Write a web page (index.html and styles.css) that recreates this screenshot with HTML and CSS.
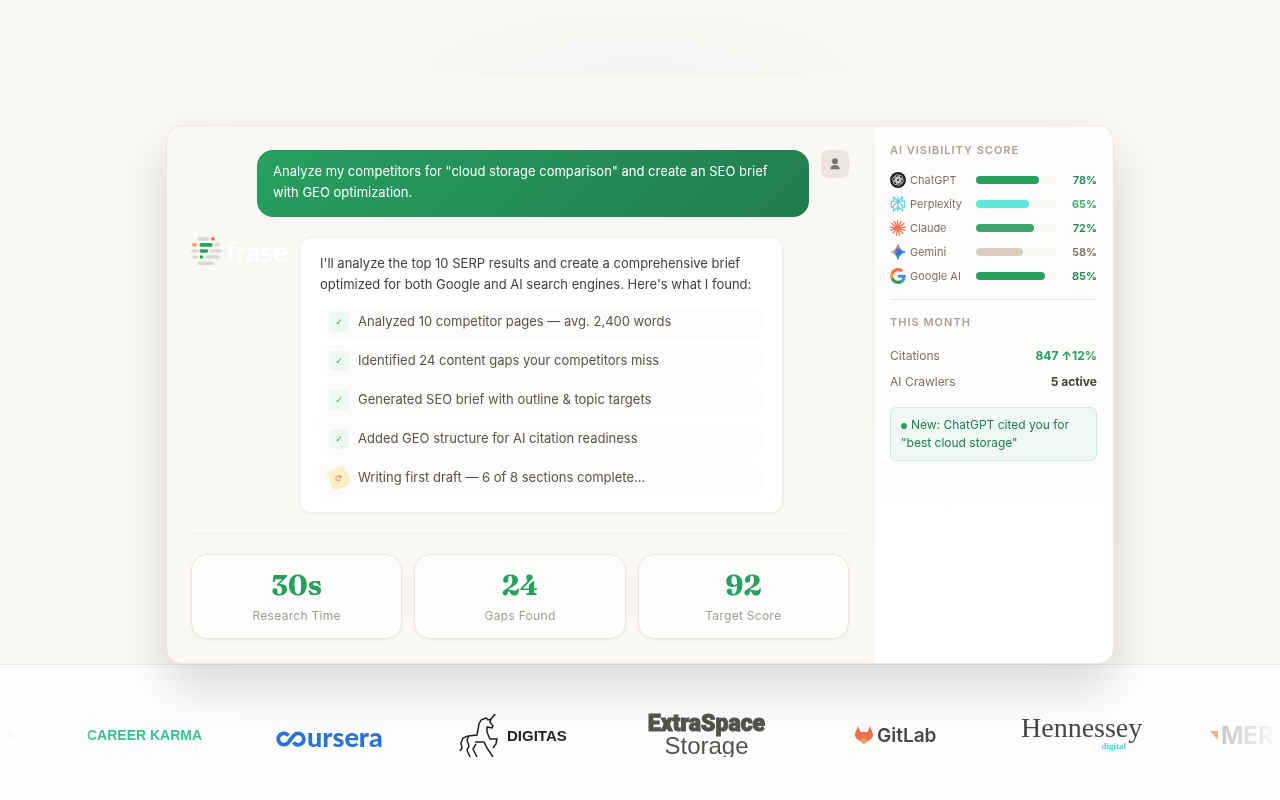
FILE: index.html
```html
<!DOCTYPE html>
<html lang="en">
<head>
    <meta charset="UTF-8">
    <meta name="viewport" content="width=device-width, initial-scale=1.0">
    <title>Frase - AI Visibility</title>
    <link rel="stylesheet" href="styles.css">
</head>
<body>

    <section class="hero">
        <div class="hero-top"></div>

        <div class="demo-card">
            <main class="chat">
                <div class="user-row">
                    <p class="user-bubble">Analyze my competitors for "cloud storage comparison" and create an SEO brief with GEO optimization.</p>
                    <div class="user-avatar">
                        <svg width="12" height="12" viewBox="0 0 12 12" fill="#78716c">
                            <circle cx="6" cy="3.2" r="2.9"/>
                            <path d="M1.5 11.2c0-3 1.7-4.2 4.5-4.2s4.5 1.2 4.5 4.2z"/>
                        </svg>
                    </div>
                </div>

                <div class="assistant-row">
                    <div class="frase-logo">
                        <svg width="32" height="30" viewBox="0 0 32 30" stroke-width="3.6" stroke-linecap="round" fill="none">
                            <path d="M8.5 1.9h7.500M25 7.900h2M1.800 14h3.700M20.800 14h8M3 20h2M16 20h11M8.300 26.200h13.200" stroke="#d9d9d8"/>
                            <path d="M21.800 1.900h.2" stroke="#f0714f"/>
                            <path d="M2.800 7.900h1.700" stroke="#eda765"/>
                            <path d="M10.300 7.900h9.600M10.300 14h5.200M10.400 20h.2" stroke="#26a05e"/>
                        </svg>
                        <span>frase</span>
                    </div>

                    <div class="answer">
                        <p>I'll analyze the top 10 SERP results and create a comprehensive brief optimized for both Google and AI search engines. Here's what I found:</p>
                        <ul class="steps">
                            <li><span class="step-icon">✓</span>Analyzed 10 competitor pages — avg. 2,400 words</li>
                            <li><span class="step-icon">✓</span>Identified 24 content gaps your competitors miss</li>
                            <li><span class="step-icon">✓</span>Generated SEO brief with outline &amp; topic targets</li>
                            <li><span class="step-icon">✓</span>Added GEO structure for AI citation readiness</li>
                            <li><span class="step-icon working">⟳</span>Writing first draft — 6 of 8 sections complete...</li>
                        </ul>
                    </div>
                </div>

                <div class="stats">
                    <div class="stat">
                        <div class="stat-value">30s</div>
                        <div class="stat-label">Research Time</div>
                    </div>
                    <div class="stat">
                        <div class="stat-value">24</div>
                        <div class="stat-label">Gaps Found</div>
                    </div>
                    <div class="stat">
                        <div class="stat-value">92</div>
                        <div class="stat-label">Target Score</div>
                    </div>
                </div>
            </main>

            <aside class="sidebar">
                <h2>AI Visibility Score</h2>
                <div class="scores">
                    <div class="score">
                        <svg width="16" height="16" viewBox="0 0 16 16" fill="none">
                            <circle cx="8" cy="8" r="8" fill="#242424"/>
                            <g stroke="#e5e5e5" stroke-width=".7">
                                <rect x="5" y="2.600" width="4.600" height="7.400" rx="2.300"/>
                                <rect x="5" y="2.600" width="4.600" height="7.400" rx="2.300" transform="rotate(60 8 8)"/>
                                <rect x="5" y="2.600" width="4.600" height="7.400" rx="2.300" transform="rotate(120 8 8)"/>
                                <rect x="5" y="2.600" width="4.600" height="7.400" rx="2.300" transform="rotate(180 8 8)"/>
                                <rect x="5" y="2.600" width="4.600" height="7.400" rx="2.300" transform="rotate(240 8 8)"/>
                                <rect x="5" y="2.600" width="4.600" height="7.400" rx="2.300" transform="rotate(300 8 8)"/>
                            </g>
                        </svg>
                        <span class="score-name">ChatGPT</span>
                        <div class="bar"><div class="fill green" style="width: 78%"></div></div>
                        <span class="score-value dark">78%</span>
                    </div>
                    <div class="score">
                        <svg width="16" height="16" viewBox="0 0 16 16" fill="none" stroke="#55d3dc" stroke-width="1.1">
                            <path d="M8 .5v15M3.500 .8v4.500h9V.8L8 5.300zM3.500 5.300H1.300v6h2.200M12.500 5.300h2.200v6h-2.200M8 5.300l-4.500 4.500v5.200L8 11M8 5.300l4.500 4.500v5.200L8 11"/>
                        </svg>
                        <span class="score-name">Perplexity</span>
                        <div class="bar"><div class="fill teal" style="width: 65%"></div></div>
                        <span class="score-value mid">65%</span>
                    </div>
                    <div class="score">
                        <svg width="16" height="16" viewBox="0 0 16 16" fill="none" stroke="#f0714f" stroke-width="1.3" stroke-linecap="round">
                            <path d="M8 8L7.500 .8M8 8l3-6.600M8 8l6-4.600M8 8l7.300-.8M8 8l7 2.300M8 8l5 5.500M8 8l1.600 7.200M8 8l-1.600 7.200M8 8l-5 5M8 8L.8 10M8 8L.7 7.200M8 8L1.800 3.500M8 8L4.300 1.600"/>
                        </svg>
                        <span class="score-name">Claude</span>
                        <div class="bar"><div class="fill soft" style="width: 72%"></div></div>
                        <span class="score-value dark">72%</span>
                    </div>
                    <div class="score">
                        <svg width="16" height="16" viewBox="0 0 16 16">
                            <defs>
                                <linearGradient id="gemini" x1="0" y1="0.4" x2="1" y2="0.6">
                                    <stop offset="0" stop-color="#eda25a"/>
                                    <stop offset=".2" stop-color="#d9a45c"/>
                                    <stop offset=".4" stop-color="#3f7fc0"/>
                                    <stop offset=".55" stop-color="#2f6fe0"/>
                                    <stop offset="1" stop-color="#3f86ee"/>
                                </linearGradient>
                            </defs>
                            <path d="M8 .5C8.800 4.200 11.300 7 15.500 8 11.300 9 8.800 11.800 8 15.500 7.200 11.800 4.700 9 .5 8 4.700 7 7.200 4.200 8 .5z" fill="url(#gemini)" stroke="url(#gemini)" stroke-width=".6"/>
                            <path d="M8 .3c.3 1.500.8 2.700 1.600 3.800L8 5.500 6.400 4.100C7.200 3 7.700 1.800 8 .3z" fill="#f0714f"/>
                            <path d="M8 15.700c-.3-1.500-.8-2.700-1.800-4L8 10.500l1.600 1.400c-.8 1.100-1.300 2.300-1.600 3.800z" fill="#2aa878"/>
                        </svg>
                        <span class="score-name">Gemini</span>
                        <div class="bar"><div class="fill sand" style="width: 58%"></div></div>
                        <span class="score-value gray">58%</span>
                    </div>
                    <div class="score">
                        <svg width="16" height="16" viewBox="0 0 48 48">
                            <path fill="#f0714f" d="M24 9.500c3.540 0 6.710 1.220 9.210 3.600l6.850-6.850C35.900 2.380 30.470 0 24 0 14.620 0 6.510 5.380 2.560 13.220l7.980 6.190C12.430 13.720 17.740 9.500 24 9.500z"/>
                            <path fill="#4a8af0" d="M46.980 24.550c0-1.570-.15-3.090-.38-4.550H24v9.020h12.940c-.58 2.960-2.260 5.480-4.780 7.180l7.730 6c4.510-4.180 7.090-10.360 7.090-17.650z"/>
                            <path fill="#eda25a" d="M10.530 28.590c-.48-1.450-.76-2.990-.76-4.590s.27-3.140.76-4.590l-7.980-6.190C.92 16.460 0 20.120 0 24c0 3.880.92 7.540 2.560 10.780l7.970-6.190z"/>
                            <path fill="#2aa05e" d="M24 48c6.480 0 11.930-2.130 15.890-5.810l-7.730-6c-2.150 1.450-4.920 2.300-8.160 2.300-6.260 0-11.570-4.220-13.470-9.910l-7.980 6.190C6.510 42.620 14.620 48 24 48z"/>
                        </svg>
                        <span class="score-name">Google AI</span>
                        <div class="bar"><div class="fill green" style="width: 85%"></div></div>
                        <span class="score-value dark">85%</span>
                    </div>
                </div>

                <h2>This Month</h2>
                <dl class="month">
                    <div><dt>Citations</dt><dd class="up">847 ↑12%</dd></div>
                    <div><dt>AI Crawlers</dt><dd>5 active</dd></div>
                </dl>
                <p class="notice"><span class="dot"></span>New: ChatGPT cited you for "best cloud storage"</p>
            </aside>
        </div>
    </section>

    <section class="customers">
        <svg class="peaks" width="220" height="60" viewBox="0 0 220 60" fill="#fdfcfa">
            <path d="M52 8L90 60H14zM188 0l52 60H146z"/>
        </svg>
        <div class="logos">
            <svg class="arrow" width="9" height="14" viewBox="0 0 9 14" fill="none" stroke="#888">
                <path d="M1 2l7 5-7 5M1 5l3 2-3 2"/>
            </svg>
            <span class="karma">CAREER KARMA</span>
            <span class="coursera">
                <svg width="31" height="16" viewBox="0 0 31 16" fill="none" stroke="#2a73d9" stroke-width="3.8">
                    <path d="M12.500 4.600A5.700 5.700 0 1 0 12.500 11.400C14.500 9 16 6.500 18 4.200A5.700 5.700 0 1 1 17.500 11.400"/>
                </svg>
                <span>ursera</span>
            </span>
            <span class="digitas">
                <svg width="39" height="43" viewBox="0 0 39 43" fill="none" stroke="#222" stroke-width="1.5">
                    <path d="M1 37l2-3-1-5 2-5 5-2 9-1 2-11 2-4 5-2 2 2 3-1 5-6M32 5l-1 3 3 4-1 2-5-1 0 5 3 7 7 0-1 5-3 4M10 22l-2 4 2 6-2 4 3 7M17 30l-3 5 4 8M16 28l9 0 3 6 6 9"/>
                </svg>
                <span>DIGITAS</span>
            </span>
            <span class="extraspace"><b>ExtraSpace</b><span>Storage</span></span>
            <span class="gitlab">
                <svg width="18" height="18" viewBox="0 0 18 18">
                    <path d="M3 0L.3 7c-.8 2.500 0 4.500 1.800 6L9 18l6.900-5c1.800-1.500 2.600-3.500 1.800-6L15 0l-2.500 6h-7z" fill="#f0714f"/>
                    <path d="M9 18l-4-3.200L9 12l4 2.800z" fill="#eda85a"/>
                </svg>
                <span>GitLab</span>
            </span>
            <span class="hennessey"><span>Hennessey</span><small>digital</small></span>
            <span class="mer">
                <svg width="8" height="9" viewBox="0 0 8 9"><path d="M0 0h8v9z" fill="#f08048"/></svg>
                <span>MER</span>
            </span>
        </div>
    </section>

</body>
</html>
```
FILE: styles.css
```css
* {
    box-sizing: border-box;
}

body {
    margin: 0;
    font-family: Inter, sans-serif;
    font-size: 13px;
    line-height: 21px;
    color: #44403c;
    background: #fefefe;
    overflow-x: hidden;
}

p, h2, ul, dl, dd {
    margin: 0;
    padding: 0;
}

.hero {
    background: #f9f8f4;
    border-bottom: 1px solid #f0e8e2;
}

.hero-top {
    height: 77px;
    margin-bottom: 48px;
    background: radial-gradient(ellipse 290px 90px at 50% 100%, #f4f3f2, #f9f8f4);
}

.demo-card {
    position: relative;
    z-index: 1;
    display: flex;
    max-width: 948px;
    margin: 0 auto;
    border: 1px solid #ede5de;
    border-radius: 16px;
    background: #f9f8f4;
    box-shadow: 0 25px 50px rgba(0, 0, 0, 0.15);
    will-change: transform;
}

.chat {
    flex: 1;
    padding: 24px;
}

.user-row {
    display: flex;
    justify-content: flex-end;
    gap: 12px;
    margin-bottom: 20px;
}

.user-bubble {
    max-width: 552px;
    padding: 11px 16px 14px;
    border-radius: 16px;
    background: linear-gradient(135deg, #27a05f, #217c4f);
    color: #fff;
}

.user-avatar {
    display: flex;
    align-items: center;
    justify-content: center;
    width: 28px;
    height: 28px;
    border-radius: 8px;
    background: #ede4de;
}

.assistant-row {
    display: flex;
    gap: 11px;
}

.frase-logo {
    display: flex;
    width: 97px;
    height: 30px;
    gap: 3px;
    font-family: Lato, sans-serif;
    font-size: 28px;
    font-weight: 700;
    line-height: 28px;
    color: #fff;
}

.answer {
    width: 484px;
    padding: 15px 20px 17px;
    border: 1px solid #f3efea;
    border-radius: 12px;
    background: #fff;
    box-shadow: 0 1px 3px rgba(0, 0, 0, 0.06);
}

.steps {
    display: grid;
    gap: 6px;
    margin-top: 11px;
    list-style: none;
}

.steps li {
    display: flex;
    align-items: center;
    gap: 9px;
    padding: 5px 9px 7px;
    border-radius: 8px;
    background: #fdfcfb;
    color: #57534e;
}

.step-icon {
    width: 20px;
    height: 20px;
    border-radius: 4px;
    background: #eef8f3;
    color: #27a05f;
    font-family: "DejaVu Sans", sans-serif;
    font-size: 9px;
    line-height: 20px;
    text-align: center;
}

.step-icon.working {
    background: #fdf0c8;
    color: #f0714f;
    transform: rotate(-25deg);
}

.stats {
    display: grid;
    grid-template-columns: repeat(3, 1fr);
    gap: 12px;
    margin-top: 20px;
    padding-top: 20px;
    border-top: 1px solid #f1eeea;
}

.stat {
    padding: 11px 16px 12px;
    border: 1px solid #ede4dd;
    border-radius: 16px;
    background: #fdfdfb;
    box-shadow: 0 1px 3px rgba(0, 0, 0, 0.06);
    text-align: center;
}

.stat-value {
    font-family: Fraunces, "DejaVu Serif", serif;
    font-size: 28px;
    font-weight: 700;
    font-variation-settings: "opsz" 72;
    line-height: 39px;
    color: #27a05f;
}

.stat-label {
    font-size: 12px;
    letter-spacing: 0.3px;
    color: #a19d99;
}

.sidebar {
    width: 240px;
    padding: 16px;
    border-left: 1px solid #f3eeea;
    border-radius: 0 15px 15px 0;
    background: linear-gradient(#fdfcfa, #fff);
}

.sidebar h2 {
    font-size: 11px;
    font-weight: 600;
    line-height: 16px;
    letter-spacing: 1px;
    text-transform: uppercase;
    color: #a8a29e;
}

.scores {
    display: grid;
    gap: 8px;
    margin: 14px 0;
    padding-bottom: 15px;
    border-bottom: 1px solid #e8e4df;
}

.score {
    display: flex;
    align-items: center;
    gap: 4px;
    font-size: 11px;
    line-height: 16px;
}

.score-name {
    width: 62px;
    color: #78716c;
}

.bar {
    flex: 1;
    height: 8px;
    border-radius: 4px;
    background: #f8f7f4;
}

.fill {
    height: 8px;
    border-radius: 4px;
}

.green { background: #27a05f; }
.teal { background: #5de8d8; }
.soft { background: #3da56c; }
.sand { background: #dacec3; }

.score-value {
    width: 36px;
    font-weight: 600;
    text-align: right;
}

.dark { color: #218350; }
.mid { color: #2fa86c; }
.gray { color: #78716c; }

.month {
    margin-top: 13px;
    font-size: 12px;
}

.month div {
    display: flex;
    justify-content: space-between;
    padding: 2px 0 3px;
}

.month dt {
    color: #78716c;
}

.month dd {
    font-weight: 700;
}

.month .up {
    color: #27a05f;
}

.notice {
    margin-top: 12px;
    padding: 8px 10px;
    border: 1px solid #d0ebde;
    border-radius: 6px;
    background: #eff8f4;
    font-size: 12px;
    line-height: 18px;
    color: #217c4f;
}

.dot {
    display: inline-block;
    width: 6px;
    height: 6px;
    margin-right: 4px;
    border-radius: 50%;
    background: #27a05f;
}

.customers {
    position: relative;
    height: 135px;
    overflow: hidden;
}

.peaks {
    position: absolute;
    right: 0;
    bottom: 0;
}

.logos {
    position: relative;
    display: flex;
    align-items: center;
    gap: 72px;
    padding: 48px 0 0 6px;
    color: #4a4744;
    white-space: nowrap;
    -webkit-mask-image: linear-gradient(90deg, transparent, #000 100px, #000 calc(100% - 100px), transparent);
    mask-image: linear-gradient(90deg, transparent, #000 100px, #000 calc(100% - 100px), transparent);
}

.logos > * {
    flex-shrink: 0;
}

.logos > span {
    display: flex;
    align-items: center;
    height: 44px;
}

.karma {
    width: 117px;
    font: bold 14px "Liberation Sans", sans-serif;
    color: #3ac28f;
}

.coursera {
    width: 111px;
    padding-top: 4px;
    font: 900 27px/20px Lato, sans-serif;
    color: #2a73d9;
}

.coursera svg {
    margin-top: 4px;
}

.digitas {
    width: 117px;
    gap: 9px;
    font: bold 15px "Liberation Sans", sans-serif;
    color: #222;
}

.logos > .extraspace {
    flex-direction: column;
    width: 117px;
    font: 24px/22px "Liberation Sans", sans-serif;
    color: #55534e;
}

.extraspace b {
    font-family: Roboto, sans-serif;
    font-size: 23px;
    font-weight: 900;
    -webkit-text-stroke: 1px #55534e;
}

.gitlab {
    width: 112px;
    padding-left: 18px;
    gap: 4px;
    font-size: 19px;
    font-weight: 600;
}

.logos > .hennessey {
    flex-direction: column;
    align-items: flex-start;
    width: 117px;
    font: 28px/30px "Liberation Serif", serif;
}

.hennessey small {
    align-self: flex-end;
    padding-right: 12px;
    font-size: 9px;
    font-weight: bold;
    line-height: 6px;
    color: #3fd6cf;
}

.mer {
    gap: 3px;
    font-size: 24px;
    font-weight: 700;
    color: #a4a4a6;
}
```
